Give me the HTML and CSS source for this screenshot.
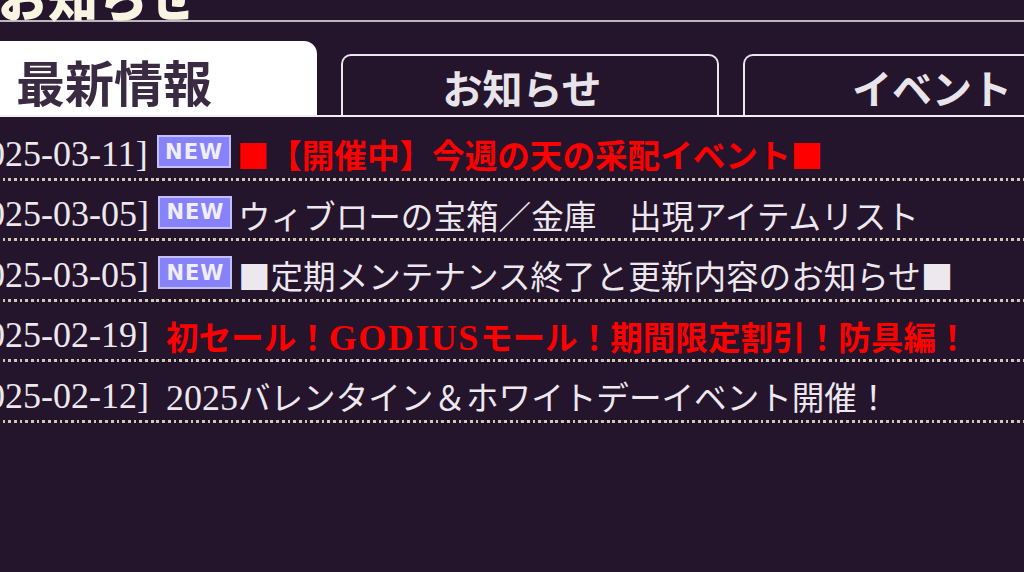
FILE: index.html
```html
<!DOCTYPE html>
<html lang="ja">
<head>
<meta charset="utf-8">
<title>お知らせ</title>
<link rel="stylesheet" href="styles.css">
</head>
<body>
<div class="page">
  <div class="head"><h1 class="head-title">お知らせ</h1></div>
  <div class="tabs">
    <div class="tab tab-active">最新情報</div>
    <div class="tab tab-mid">お知らせ</div>
    <div class="tab">イベント</div>
  </div>
  <ul class="news">
    <li class="row">
      <span class="date">[2025-03-11]</span>
      <span class="badge">NEW</span>
      <span class="title red">■【開催中】今週の天の采配イベント■</span>
    </li>
    <li class="row">
      <span class="date">[2025-03-05]</span>
      <span class="badge">NEW</span>
      <span class="title">ウィブローの宝箱／金庫　出現アイテムリスト</span>
    </li>
    <li class="row">
      <span class="date">[2025-03-05]</span>
      <span class="badge">NEW</span>
      <span class="title">■定期メンテナンス終了と更新内容のお知らせ■</span>
    </li>
    <li class="row">
      <span class="date">[2025-02-19]</span>
      <span class="title red plain">初セール！<span class="latin wide">GODIUS</span>モール！期間限定割引！防具編！</span>
    </li>
    <li class="row">
      <span class="date">[2025-02-12]</span>
      <span class="title plain"><span class="latin">2025</span>バレンタイン＆ホワイトデーイベント開催！</span>
    </li>
  </ul>
</div>
</body>
</html>
```
FILE: styles.css
```css
html, body {
  margin: 0;
  padding: 0;
  background: #24142c;
}
body {
  width: 1024px;
  height: 572px;
  overflow: hidden;
  font-family: "Noto Sans CJK JP", sans-serif;
  color: #ece8ee;
}
.page {
  width: 1024px;
  height: 572px;
  overflow: hidden;
}
.head {
  margin-top: -30px;
  height: 50px;
  border-bottom: 2px solid #bdb6bd;
}
.head-title {
  margin: 0 0 0 -2px;
  font-size: 50px;
  line-height: 50px;
  font-weight: 900;
  color: #f8f4e2;
  letter-spacing: 0;
}
.tabs {
  margin-top: 19px;
  margin-left: -61px;
  display: flex;
  align-items: flex-end;
  gap: 24px;
  border-bottom: 2px solid #f2eef4;
}
.tab {
  flex: 0 0 auto;
  box-sizing: border-box;
  width: 378px;
  height: 61px;
  border: 2px solid #ebe7ee;
  border-bottom: 0;
  border-radius: 10px 10px 0 0;
  display: flex;
  align-items: center;
  justify-content: center;
  font-size: 40px;
  font-weight: 700;
  color: #e8e4ea;
  padding-top: 2px;
}
.tab-mid {
  padding-right: 16px;
}
.tab-active {
  height: 74px;
  border: 0;
  border-radius: 0 13px 0 0;
  background: #ffffff;
  color: #3a2b42;
  font-size: 49px;
  justify-content: flex-start;
  padding-left: 77px;
  padding-top: 4px;
  padding-right: 0;
}
.news {
  list-style: none;
  margin: 3px 0 0 -43px;
  padding: 0;
}
.row {
  box-sizing: border-box;
  height: 60.5px;
  padding-top: 10px;
  padding-bottom: 3px;
  display: flex;
  align-items: center;
  white-space: nowrap;
  background-image: repeating-linear-gradient(to right, #d0c7b0 0 2.7px, transparent 2.7px 5.7px);
  background-size: 100% 3px;
  background-repeat: no-repeat;
  background-position: left bottom;
}
.date {
  font-family: "Liberation Serif", serif;
  font-size: 36px;
  color: #ece8ee;
}
.badge {
  box-sizing: border-box;
  width: 74px;
  height: 33px;
  margin-left: 9px;
  margin-right: 6px;
  margin-top: -4px;
  border: 2px solid #c3bfff;
  background: #8882fa;
  color: #f0efff;
  font-family: "DejaVu Sans", sans-serif;
  font-weight: 700;
  font-size: 21px;
  letter-spacing: 1px;
  display: flex;
  align-items: center;
  justify-content: center;
  padding-left: 1px;
}
.title {
  font-size: 32.6px;
  color: #ece8ee;
}
.title.plain {
  margin-left: 17px;
}
.red {
  color: #ff0000;
  font-weight: 700;
}
.latin {
  font-family: "Liberation Serif", serif;
  font-size: 36px;
}
.wide {
  letter-spacing: 1.5px;
}
```
